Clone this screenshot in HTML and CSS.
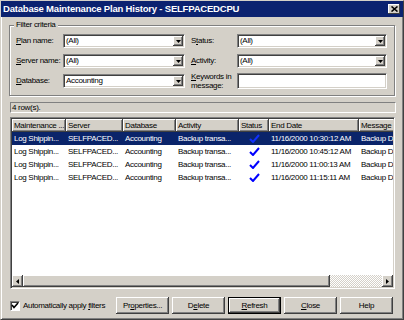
FILE: index.html
```html
<!DOCTYPE html>
<html lang="en">
<head>
    <meta charset="UTF-8">
    <title>Database Maintenance Plan History</title>
    <link rel="stylesheet" href="styles.css">
</head>
<body>
<div class="window">
    <div class="titlebar">
        <span class="title">Database Maintenance Plan History - SELFPACEDCPU</span>
        <span class="close-btn"><svg width="7" height="6" viewBox="0 0 7 6"><path d="M0.5 0.5L6.5 5.5M6.5 0.5L0.5 5.5" stroke="#000" stroke-width="1.6"/></svg></span>
    </div>
    <div class="content">
        <fieldset class="filters">
            <legend>Filter criteria</legend>
            <div class="filter-grid">
                <label><u>P</u>lan name:</label>
                <div class="combo"><span class="value">(All)</span><span class="drop"><svg width="5" height="3" viewBox="0 0 5 3"><path d="M0 0h5L2.5 3z"/></svg></span></div>
                <label class="right">S<u>t</u>atus:</label>
                <div class="combo"><span class="value">(All)</span><span class="drop"><svg width="5" height="3" viewBox="0 0 5 3"><path d="M0 0h5L2.5 3z"/></svg></span></div>

                <label><u>S</u>erver name:</label>
                <div class="combo"><span class="value">(All)</span><span class="drop"><svg width="5" height="3" viewBox="0 0 5 3"><path d="M0 0h5L2.5 3z"/></svg></span></div>
                <label class="right"><u>A</u>ctivity:</label>
                <div class="combo"><span class="value">(All)</span><span class="drop"><svg width="5" height="3" viewBox="0 0 5 3"><path d="M0 0h5L2.5 3z"/></svg></span></div>

                <label><u>D</u>atabase:</label>
                <div class="combo"><span class="value">Accounting</span><span class="drop"><svg width="5" height="3" viewBox="0 0 5 3"><path d="M0 0h5L2.5 3z"/></svg></span></div>
                <label class="right kw-label"><u>K</u>eywords in<br>message:</label>
                <div class="textbox"></div>
            </div>
        </fieldset>

        <div class="rowcount">4 row(s).</div>

        <div class="listview">
            <div class="list-body">
                <table class="history">
                    <colgroup>
                        <col style="width:54px"><col style="width:57px"><col style="width:53px"><col style="width:63px"><col style="width:30px"><col style="width:90px"><col style="width:36px">
                    </colgroup>
                    <thead>
                        <tr>
                            <th>Maintenance ...</th>
                            <th>Server</th>
                            <th>Database</th>
                            <th>Activity</th>
                            <th>Status</th>
                            <th>End Date</th>
                            <th>Message</th>
                        </tr>
                    </thead>
                    <tbody>
                        <tr class="selected">
                            <td>Log Shippin...</td><td>SELFPACED...</td><td>Accounting</td><td>Backup transa...</td>
                            <td class="status"><svg width="11" height="9" viewBox="0 0 11 9"><path d="M1 5L4 8L10 1" fill="none" stroke="#1030ff" stroke-width="2"/></svg></td>
                            <td>11/16/2000 10:30:12 AM</td><td>Backup D</td>
                        </tr>
                        <tr>
                            <td>Log Shippin...</td><td>SELFPACED...</td><td>Accounting</td><td>Backup transa...</td>
                            <td class="status"><svg width="11" height="9" viewBox="0 0 11 9"><path d="M1 5L4 8L10 1" fill="none" stroke="#0000ff" stroke-width="2"/></svg></td>
                            <td>11/16/2000 10:45:12 AM</td><td>Backup D</td>
                        </tr>
                        <tr>
                            <td>Log Shippin...</td><td>SELFPACED...</td><td>Accounting</td><td>Backup transa...</td>
                            <td class="status"><svg width="11" height="9" viewBox="0 0 11 9"><path d="M1 5L4 8L10 1" fill="none" stroke="#0000ff" stroke-width="2"/></svg></td>
                            <td>11/16/2000 11:00:13 AM</td><td>Backup D</td>
                        </tr>
                        <tr>
                            <td>Log Shippin...</td><td>SELFPACED...</td><td>Accounting</td><td>Backup transa...</td>
                            <td class="status"><svg width="11" height="9" viewBox="0 0 11 9"><path d="M1 5L4 8L10 1" fill="none" stroke="#0000ff" stroke-width="2"/></svg></td>
                            <td>11/16/2000 11:15:11 AM</td><td>Backup D</td>
                        </tr>
                    </tbody>
                </table>
            </div>
            <div class="hscroll">
                <span class="sb-btn"><svg width="3" height="5" viewBox="0 0 3 5"><path d="M3 0v5L0 2.5z"/></svg></span>
                <span class="sb-thumb"></span>
                <span class="sb-track"></span>
                <span class="sb-btn"><svg width="3" height="5" viewBox="0 0 3 5"><path d="M0 0v5L3 2.5z"/></svg></span>
            </div>
        </div>

        <div class="footer">
            <label class="check-label">
                <span class="checkbox"><svg width="8" height="7" viewBox="0 0 8 7"><path d="M1 3L3 5.5L7 1" fill="none" stroke="#000" stroke-width="1.6"/></svg></span>
                <span>Automatically apply <u>f</u>ilters</span>
            </label>
            <div class="buttons">
                <button class="btn">Pr<u>o</u>perties...</button>
                <button class="btn">D<u>e</u>lete</button>
                <button class="btn default"><u>R</u>efresh</button>
                <button class="btn"><u>C</u>lose</button>
                <button class="btn">Help</button>
            </div>
        </div>
    </div>
</div>
</body>
</html>
```

FILE: styles.css
```css
body {
    margin: 0;
    background: #d4d0c8;
    font: 8px/10px "Liberation Sans", Arial, sans-serif;
    letter-spacing: -0.3px;
    color: #000;
}

.window {
    width: 404px;
    height: 320px;
    box-sizing: border-box;
    border: 1px solid;
    border-color: #d4d0c8 #404040 #404040 #d4d0c8;
    box-shadow: inset 1px 1px #fff, inset -1px -1px #808080;
    background: #d4d0c8;
}

/* Title bar */
.titlebar {
    display: flex;
    align-items: center;
    justify-content: space-between;
    height: 16px;
    padding: 0 3px 0 2px;
    background: #0b2270;
    color: #fff;
    font-weight: bold;
    font-size: 9.5px;
    letter-spacing: -0.2px;
}

.close-btn {
    width: 12px;
    height: 10px;
    box-sizing: border-box;
    display: flex;
    align-items: center;
    justify-content: center;
    background: #d4d0c8;
    box-shadow: inset -1px -1px #404040, inset 1px 1px #fff;
}

.content {
    padding: 0 8px;
}

/* Filter group */
.filters {
    margin: 3px 0 0;
    padding: 4px 6px 7px 6px;
    border: 1px solid #808080;
    box-shadow: inset 1px 1px #fff, 1px 1px #fff;
    min-width: 0;
}

.filters legend {
    margin-left: -2px;
    padding: 0 2px;
    line-height: 10px;
    background: #d4d0c8;
}

.filter-grid {
    display: grid;
    grid-template-columns: 47px 122px 52px 150px;
    grid-auto-rows: 14px;
    row-gap: 6px;
    align-items: center;
}

.filter-grid label {
    white-space: nowrap;
}

.filter-grid label.right {
    padding-left: 6px;
}

.kw-label {
    line-height: 9px;
}

.combo,
.textbox {
    height: 14px;
    box-sizing: border-box;
    display: flex;
    align-items: center;
    padding: 1px 1px 1px 2px;
    background: #fff;
    border: 1px solid;
    border-color: #808080 #fff #fff #808080;
    box-shadow: inset 1px 1px #404040, inset -1px -1px #d4d0c8;
}

.textbox {
    height: 16px;
}

.combo .value {
    flex: 1;
}

.drop {
    width: 10px;
    height: 10px;
    display: flex;
    align-items: center;
    justify-content: center;
    background: #d4d0c8;
    box-shadow: inset -1px -1px #404040, inset 1px 1px #fff, inset -2px -2px #808080;
}

/* Row count strip */
.rowcount {
    margin: 6px 0 0 1px;
    width: 386px;
    height: 11px;
    box-sizing: border-box;
    padding-left: 1px;
    line-height: 9px;
    border: 1px solid;
    border-color: #808080 #fff #fff #808080;
}

/* List view */
.listview {
    margin: 4px 0 0 1px;
    width: 385px;
    height: 172px;
    box-sizing: border-box;
    padding: 1px;
    display: flex;
    flex-direction: column;
    background: #fff;
    border: 1px solid;
    border-color: #808080 #fff #fff #808080;
    box-shadow: inset 1px 1px #404040, inset -1px -1px #d4d0c8;
}

.list-body {
    flex: 1;
    overflow: hidden;
}

.history {
    width: 383px;
    table-layout: fixed;
    border-collapse: collapse;
}

.history th,
.history td {
    padding: 0 0 0 2px;
    text-align: left;
    white-space: nowrap;
    overflow: hidden;
    line-height: 10px;
}

.history th {
    height: 13px;
    font-weight: normal;
    background: #d4d0c8;
    box-shadow: inset -1px -1px #404040, inset 1px 1px #fff, inset -2px -2px #808080;
}

.history td {
    height: 13px;
}

.history td.status {
    padding: 0;
    text-align: center;
}

.history td.status svg {
    display: block;
    margin: 0 auto;
}

.history tr.selected td {
    background: #0a246a;
    color: #fff;
}

/* Horizontal scrollbar */
.hscroll {
    display: flex;
    height: 12px;
}

.sb-btn,
.sb-thumb {
    box-sizing: border-box;
    background: #d4d0c8;
    box-shadow: inset -1px -1px #404040, inset 1px 1px #fff, inset -2px -2px #808080;
}

.sb-btn {
    width: 11px;
    display: flex;
    align-items: center;
    justify-content: center;
}

.sb-thumb {
    width: 307px;
}

.sb-track {
    flex: 1;
    background: repeating-conic-gradient(#fff 0 25%, #d4d0c8 0 50%) 0 0 / 2px 2px;
}

/* Footer */
.footer {
    display: flex;
    align-items: center;
    margin-top: 8px;
    height: 17px;
}

.check-label {
    display: flex;
    align-items: center;
    gap: 3px;
    margin-left: 1px;
    white-space: nowrap;
}

.checkbox {
    width: 10px;
    height: 10px;
    box-sizing: border-box;
    display: flex;
    align-items: center;
    justify-content: center;
    background: #fff;
    border: 1px solid;
    border-color: #808080 #fff #fff #808080;
    box-shadow: inset 1px 1px #404040;
}

.buttons {
    display: flex;
    gap: 3px;
    margin-left: auto;
    margin-right: 2px;
}

.btn {
    width: 53px;
    height: 17px;
    box-sizing: border-box;
    padding: 0;
    border: 0;
    font: inherit;
    letter-spacing: inherit;
    color: #000;
    display: flex;
    align-items: center;
    justify-content: center;
    background: #d4d0c8;
    box-shadow: inset -1px -1px #404040, inset 1px 1px #fff, inset -2px -2px #808080;
}

.btn.default {
    border: 1px solid #000;
}
```
